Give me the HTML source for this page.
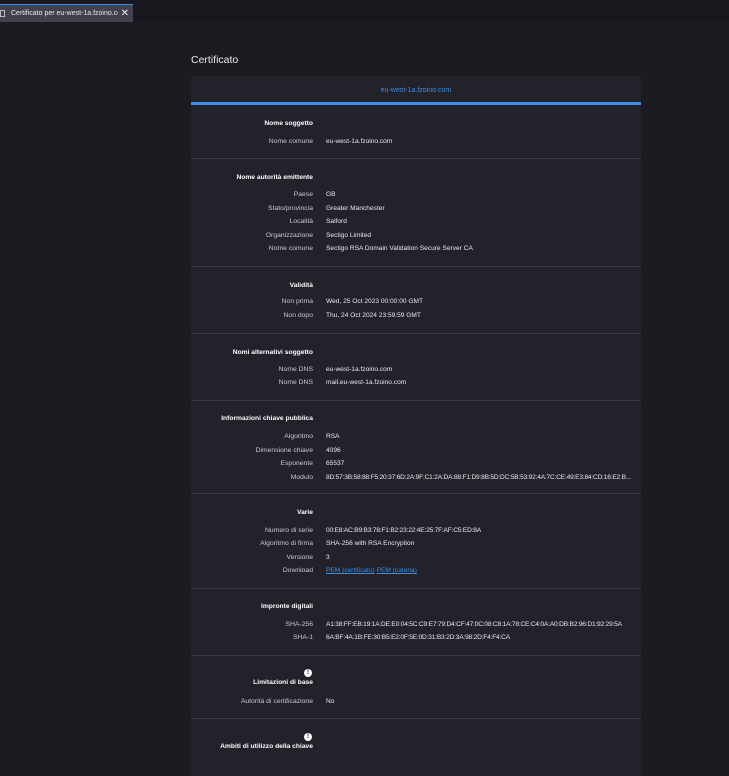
<!DOCTYPE html>
<html><head><meta charset="utf-8"><style>
*{margin:0;padding:0;box-sizing:border-box}
html,body{width:729px;height:750px;overflow:hidden;background:#1c1b22;font-family:"Liberation Sans",sans-serif;color:#fbfbfe}
.tabbar{position:absolute;left:0;top:0;width:729px;height:22px;background:#18171d}
.tab{position:absolute;left:0;top:4px;width:133px;height:18px;background:#42414d;border-top:1px solid #3b8ee6;font-size:7px;color:#e8e8ea;line-height:17px;padding-left:11px;white-space:nowrap;overflow:hidden}
.tab .ic{position:absolute;left:0;top:5px;width:5px;height:7px;border:1px solid #bbb}
.tab .x{position:absolute;right:4px;top:0;font-size:10px;color:#eee;background:#42414d;padding-left:3px}
.h1{position:absolute;left:191px;top:54px;font-size:10.5px;color:#e8e8ec}
.card{position:absolute;left:191px;top:76px;width:450px;height:700px;background:#23222b}
.hdr{position:absolute;left:0;top:0;width:450px;height:27px;text-align:center;line-height:29px;font-size:7px;color:#3b8ee6}
.bl{position:absolute;left:0;top:26px;width:450px;height:3px;background:#3b8ee6}
.sep{position:absolute;left:0;width:450px;height:1px;background:#3a3944}
.t{position:absolute;right:328px;font-size:6.7px;font-weight:bold;line-height:10px;white-space:nowrap;color:#fbfbfe;margin-top:2px}
.l{position:absolute;right:328px;font-size:6.8px;line-height:10px;color:#c8c8cf;white-space:nowrap;margin-top:2px}
.v{position:absolute;left:135px;font-size:6.6px;line-height:10px;color:#e8e8ec;white-space:nowrap;margin-top:2px}
.hx{letter-spacing:-0.2px}
.v a{color:#3b8ee6;text-decoration:underline}
.i{position:absolute;left:113px;width:8px;height:8px;border-radius:50%;background:#fbfbfe;color:#23222b;font-size:6px;font-weight:bold;text-align:center;line-height:8px;margin-top:1px}
</style></head><body>
<div class="tabbar"><div class="tab"><span class="ic"></span>Certificato per eu-west-1a.fzoino.co<span class="x">✕</span></div></div>
<div class="h1">Certificato</div>
<div class="card">
<div class="hdr"><span style="color:#3b8ee6">eu-west-1a.fzoino.com</span></div><div class="bl"></div>

<div class="t" style="top:41px">Nome soggetto</div>
<div class="l" style="top:59px">Nome comune</div><div class="v" style="top:59px">eu-west-1a.fzoino.com</div>
<div class="sep" style="top:82px"></div>

<div class="t" style="top:95px">Nome autorità emittente</div>
<div class="l" style="top:112px">Paese</div><div class="v" style="top:112px">GB</div>
<div class="l" style="top:126px">Stato/provincia</div><div class="v" style="top:126px">Greater Manchester</div>
<div class="l" style="top:139px">Località</div><div class="v" style="top:139px">Salford</div>
<div class="l" style="top:153px">Organizzazione</div><div class="v" style="top:153px">Sectigo Limited</div>
<div class="l" style="top:166px">Nome comune</div><div class="v" style="top:166px">Sectigo RSA Domain Validation Secure Server CA</div>
<div class="sep" style="top:190px"></div>

<div class="t" style="top:203px">Validità</div>
<div class="l" style="top:219px">Non prima</div><div class="v" style="top:219px">Wed, 25 Oct 2023 00:00:00 GMT</div>
<div class="l" style="top:233px">Non dopo</div><div class="v" style="top:233px">Thu, 24 Oct 2024 23:59:59 GMT</div>
<div class="sep" style="top:257px"></div>

<div class="t" style="top:270px">Nomi alternativi soggetto</div>
<div class="l" style="top:287px">Nome DNS</div><div class="v" style="top:287px">eu-west-1a.fzoino.com</div>
<div class="l" style="top:300px">Nome DNS</div><div class="v" style="top:300px">mail.eu-west-1a.fzoino.com</div>
<div class="sep" style="top:324px"></div>

<div class="t" style="top:336px">Informazioni chiave pubblica</div>
<div class="l" style="top:354px">Algoritmo</div><div class="v" style="top:354px">RSA</div>
<div class="l" style="top:368px">Dimensione chiave</div><div class="v" style="top:368px">4096</div>
<div class="l" style="top:381px">Esponente</div><div class="v" style="top:381px">65537</div>
<div class="l" style="top:395px">Modulo</div><div class="v hx" style="top:395px">8D:57:3B:58:88:F5:20:37:6D:2A:9F:C1:2A:DA:88:F1:D9:8B:5D:DC:5B:53:92:4A:7C:CE:49:E3:84:CD:16:E2:B...</div>
<div class="sep" style="top:417px"></div>

<div class="t" style="top:430px">Varie</div>
<div class="l" style="top:448px">Numero di serie</div><div class="v hx" style="top:448px">00:E8:AC:B9:B3:78:F1:B2:23:22:4E:25:7F:AF:C5:ED:8A</div>
<div class="l" style="top:461px">Algoritmo di firma</div><div class="v" style="top:461px">SHA-256 with RSA Encryption</div>
<div class="l" style="top:475px">Versione</div><div class="v" style="top:475px">3</div>
<div class="l" style="top:488px">Download</div><div class="v" style="top:488px"><a>PEM (certificato)</a> <a>PEM (catena)</a></div>
<div class="sep" style="top:512px"></div>

<div class="t" style="top:524px">Impronte digitali</div>
<div class="l" style="top:542px">SHA-256</div><div class="v hx" style="top:542px">A1:38:FF:EB:19:1A:DE:E0:04:5C:C9:E7:79:D4:CF:47:0C:08:C8:1A:78:CE:C4:0A:A0:DB:B2:96:D1:92:29:5A</div>
<div class="l" style="top:555px">SHA-1</div><div class="v hx" style="top:555px">6A:BF:4A:1B:FE:30:B5:E2:0F:5E:0D:31:B3:2D:3A:98:2D:F4:F4:CA</div>
<div class="sep" style="top:579px"></div>

<div class="i" style="top:592px">!</div>
<div class="t" style="top:600px">Limitazioni di base</div>
<div class="l" style="top:619px">Autorità di certificazione</div><div class="v" style="top:619px">No</div>
<div class="sep" style="top:642px"></div>

<div class="i" style="top:656px">!</div>
<div class="t" style="top:664px">Ambiti di utilizzo della chiave</div>
</div>
</body></html>
